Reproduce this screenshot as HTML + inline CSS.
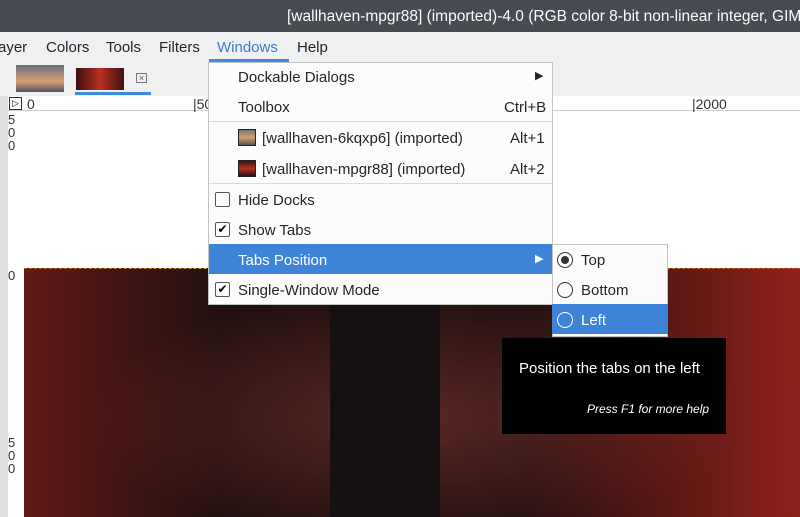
<!DOCTYPE html>
<html><head><style>
*{margin:0;padding:0;box-sizing:border-box}
body{width:800px;height:517px;overflow:hidden;position:relative;font-family:"Liberation Sans","DejaVu Sans",sans-serif;background:#fff}
.abs{position:absolute}
.t{font-size:15px;color:#232629;white-space:nowrap}
</style></head><body>
<div class="abs" style="left:0;top:0;width:800px;height:32px;background:#474c52"></div>
<div class="abs t" style="left:287px;top:8px;color:#fcfcfc;font-size:15.5px">[wallhaven-mpgr88] (imported)-4.0 (RGB color 8-bit non-linear integer, GIMP</div>
<div class="abs" style="left:0;top:32px;width:800px;height:30px;background:#eff0f1"></div>
<div class="abs t" style="left:-2px;top:39px">ayer</div>
<div class="abs t" style="left:46px;top:39px">Colors</div>
<div class="abs t" style="left:106px;top:39px">Tools</div>
<div class="abs t" style="left:159px;top:39px">Filters</div>
<div class="abs t" style="left:217px;top:39px;color:#3d7cc9">Windows</div>
<div class="abs" style="left:209px;top:59px;width:80px;height:3px;background:#3d8be0"></div>
<div class="abs t" style="left:297px;top:39px">Help</div>
<div class="abs" style="left:0;top:62px;width:800px;height:34px;background:#eff0f1"></div>
<div class="abs" style="left:16px;top:65px;width:48px;height:27px;background:linear-gradient(#6c6c80,#d4a070 60%,#5a5060)"></div>
<div class="abs" style="left:76px;top:68px;width:48px;height:22px;background:linear-gradient(90deg,#3a1010,#b83020 50%,#401010)"></div>
<div class="abs" style="left:75px;top:92px;width:76px;height:3px;background:#3d8be0"></div>
<div class="abs" style="left:136px;top:73px;width:11px;height:10px;border:1px solid #777;font-size:9px;line-height:8px;text-align:center;color:#555">×</div>
<div class="abs" style="left:0;top:96px;width:800px;height:421px;background:#fff"></div>
<div class="abs" style="left:0;top:96px;width:8px;height:421px;background:#e0e0e0"></div>
<div class="abs" style="left:8px;top:96px;width:792px;height:15px;background:#fff;border-bottom:1px solid #ccc"></div>
<div class="abs" style="left:9px;top:97px;width:13px;height:13px;border:1px solid #333;font-size:9px;line-height:11px;text-align:center">▷</div>
<div class="abs" style="left:27px;top:96px;font-size:14px;color:#333">0</div>
<div class="abs" style="left:193px;top:96px;font-size:14px;color:#333">|50</div>
<div class="abs" style="left:692px;top:96px;font-size:14px;color:#333">|2000</div>
<div class="abs" style="left:8px;top:113px;font-size:13px;line-height:13px;color:#333">5<br>0<br>0</div>
<div class="abs" style="left:8px;top:268px;font-size:13px;color:#333">0</div>
<div class="abs" style="left:8px;top:436px;font-size:13px;line-height:13px;color:#333">5<br>0<br>0</div>
<div class="abs" style="left:24px;top:268px;width:776px;height:249px;background:radial-gradient(ellipse at 50% 60%,#5a2824,#221010 60%),#2a1412;border-top:1px dashed #d0a020"></div>
<div class="abs" style="left:24px;top:268px;width:776px;height:249px;background:linear-gradient(90deg,rgba(150,35,28,.55),transparent 25%,transparent 65%,rgba(190,40,30,.7))"></div>
<div class="abs" style="left:330px;top:268px;width:110px;height:249px;background:#161010"></div>
<!-- menu -->
<div class="abs" style="left:208px;top:62px;width:345px;height:243px;background:#fcfcfc;border:1px solid #c0c2c4"></div>
<div class="abs t" style="left:238px;top:69px">Dockable Dialogs</div>
<div class="abs t" style="left:535px;top:69px;font-size:11px">▶</div>
<div class="abs t" style="left:238px;top:99px">Toolbox</div>
<div class="abs t" style="left:504px;top:99px">Ctrl+B</div>
<div class="abs" style="left:209px;top:121px;width:343px;height:1px;background:#dcdcdc"></div>
<div class="abs" style="left:238px;top:129px;width:18px;height:17px;border:1px solid #222;background:linear-gradient(#777,#d6a070,#555)"></div>
<div class="abs t" style="left:262px;top:130px">[wallhaven-6kqxp6] (imported)</div>
<div class="abs t" style="left:510px;top:130px">Alt+1</div>
<div class="abs" style="left:238px;top:160px;width:18px;height:17px;border:1px solid #222;background:linear-gradient(#401010,#b03020,#301010)"></div>
<div class="abs t" style="left:262px;top:161px">[wallhaven-mpgr88] (imported)</div>
<div class="abs t" style="left:510px;top:161px">Alt+2</div>
<div class="abs" style="left:209px;top:183px;width:343px;height:1px;background:#dcdcdc"></div>
<div class="abs" style="left:215px;top:192px;width:15px;height:15px;border:1px solid #555;border-radius:2px"></div>
<div class="abs t" style="left:238px;top:192px">Hide Docks</div>
<div class="abs" style="left:215px;top:222px;width:15px;height:15px;border:1px solid #555;border-radius:2px;font-size:12px;line-height:13px;text-align:center">✔</div>
<div class="abs t" style="left:238px;top:222px">Show Tabs</div>
<div class="abs" style="left:209px;top:244px;width:343px;height:30px;background:#3d84d9"></div>
<div class="abs t" style="left:238px;top:252px;color:#fff">Tabs Position</div>
<div class="abs t" style="left:535px;top:252px;font-size:11px;color:#fff">▶</div>
<div class="abs" style="left:215px;top:282px;width:15px;height:15px;border:1px solid #555;border-radius:2px;font-size:12px;line-height:13px;text-align:center">✔</div>
<div class="abs t" style="left:238px;top:282px">Single-Window Mode</div>
<!-- submenu -->
<div class="abs" style="left:552px;top:244px;width:116px;height:93px;background:#fcfcfc;border:1px solid #c0c2c4"></div>
<div class="abs" style="left:557px;top:252px;width:16px;height:16px;border:1px solid #333;border-radius:50%"><div style="margin:3px;width:8px;height:8px;border-radius:50%;background:#333"></div></div>
<div class="abs t" style="left:581px;top:252px">Top</div>
<div class="abs" style="left:557px;top:282px;width:16px;height:16px;border:1px solid #333;border-radius:50%"></div>
<div class="abs t" style="left:581px;top:282px">Bottom</div>
<div class="abs" style="left:552px;top:304px;width:116px;height:30px;background:#3d84d9"></div>
<div class="abs" style="left:557px;top:312px;width:16px;height:16px;border:1px solid #fff;border-radius:50%"></div>
<div class="abs t" style="left:581px;top:312px;color:#fff">Left</div>
<!-- tooltip -->
<div class="abs" style="left:502px;top:338px;width:224px;height:96px;background:#000"></div>
<div class="abs t" style="left:519px;top:360px;color:#fff">Position the tabs on the left</div>
<div class="abs" style="left:587px;top:402px;color:#fff;font-size:12px;font-style:italic;white-space:nowrap">Press F1 for more help</div>
</body></html>
